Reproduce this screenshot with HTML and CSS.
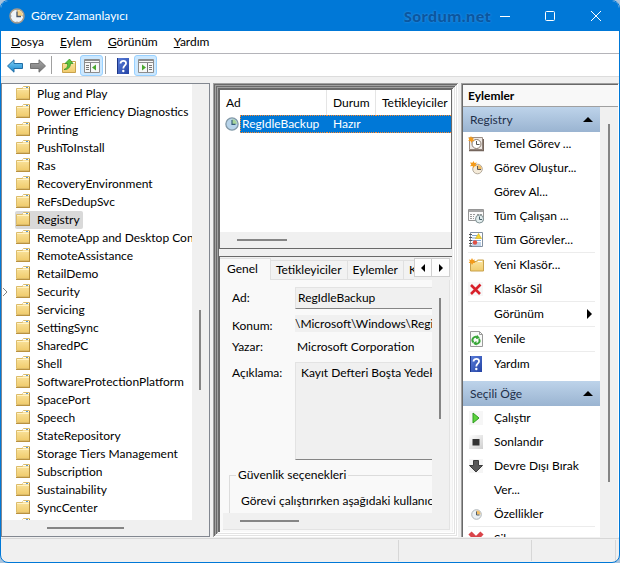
FILE: index.html
```html
<!DOCTYPE html>
<html lang="tr">
<head>
<meta charset="utf-8">
<title>Görev Zamanlayıcı</title>
<link rel="stylesheet" href="styles.css">
</head>
<body>
<svg class="defs" aria-hidden="true">
  <defs>
    <linearGradient id="g-folder" x1="0" y1="0" x2="0" y2="1"><stop offset="0" stop-color="#fbe6a4"/><stop offset="1" stop-color="#f0cb6c"/></linearGradient>
    <linearGradient id="g-back" x1="0" y1="0" x2="0" y2="1"><stop offset="0" stop-color="#7fd0f6"/><stop offset="1" stop-color="#1686cf"/></linearGradient>
    <linearGradient id="g-fwd" x1="0" y1="0" x2="0" y2="1"><stop offset="0" stop-color="#a8a8a8"/><stop offset="1" stop-color="#747474"/></linearGradient>
    <linearGradient id="g-help" x1="0" y1="0" x2="1" y2="1"><stop offset="0" stop-color="#5c80dc"/><stop offset="1" stop-color="#2443a4"/></linearGradient>
    <linearGradient id="g-stop" x1="0" y1="0" x2="1" y2="1"><stop offset="0" stop-color="#fff"/><stop offset="1" stop-color="#cfcfcf"/></linearGradient>
  </defs>
  <symbol id="folder" viewBox="0 0 16 16">
    <path d="M1.500 3.500h6l1-2h6v12h-13z" fill="url(#g-folder)" stroke="#dcbc6a"/>
    <path d="M1 14.500h14M14.500 2v12" stroke="#b9913f" fill="none"/>
    <path d="M8 2.500h6" stroke="#fff"/><path d="M11 2.500h2" stroke="#5b9bd5"/>
    <path d="M2 4.500h12" stroke="#fff3c8"/>
  </symbol>
  <symbol id="clock" viewBox="0 0 16 16">
    <circle cx="8" cy="8" r="7" fill="#eef3f8" stroke="#a59a8c" stroke-width="1.500"/>
    <path d="M8 8V2a6 6 0 0 1 6 6z" fill="#f3cf86"/>
    <path d="M8 3.500V8.500h4" fill="none" stroke="#44546b" stroke-width="1.300"/>
    <path d="M8 1.500v1M8 13.500v1M1.500 8h1M13.500 8h1" stroke="#6d7c8e"/>
  </symbol>
  <symbol id="task" viewBox="0 0 16 16">
    <circle cx="8" cy="8" r="7" fill="#b8d4ea" stroke="#8299a8" stroke-width="1.500"/>
    <path d="M8 8V2.500a5.500 5.500 0 0 1 5.500 5.500z" fill="#a9d69b"/>
    <path d="M8 3.500V8.500h4" fill="none" stroke="#345d78" stroke-width="1.300"/>
  </symbol>
  <symbol id="back" viewBox="0 0 16 16"><path d="M.5 8 7 1.800V5.500h8.500v5H7v3.700z" fill="url(#g-back)" stroke="#206da5"/></symbol>
  <symbol id="forward" viewBox="0 0 16 16"><path d="M15.500 8 9 1.800V5.500H.5v5H9v3.700z" fill="url(#g-fwd)" stroke="#737373"/></symbol>
  <symbol id="up" viewBox="0 0 16 16">
    <path d="M1.500 5.500h6l1-2h6v11h-13z" fill="url(#g-folder)" stroke="#c9a24c"/>
    <path d="M9 4.500h5" stroke="#fff"/>
    <path d="M3 11.500c3-1 4-3 3.500-6H4L8.500 1 12 5.500H9.500C9.500 9 7 12 3 11.500z" fill="#5cc43c" stroke="#2f8f22" stroke-width=".7"/>
  </symbol>
  <symbol id="pane-left" viewBox="0 0 16 16">
    <path d="M.5 1.500h15v13H.5z" fill="#f7f7f7" stroke="#8d8d8d"/><path d="M1 2.500h14M1 4.500h14" stroke="#8d8d8d"/>
    <path d="M6.500 5v9M2 7.500h3M2 9.500h3M2 11.500h3" stroke="#777"/><path d="M12 6.500v6L8 9.500z" fill="#4aa82e"/>
  </symbol>
  <symbol id="pane-right" viewBox="0 0 16 16">
    <path d="M.5 1.500h15v13H.5z" fill="#f7f7f7" stroke="#8d8d8d"/><path d="M1 2.500h14M1 4.500h14" stroke="#8d8d8d"/>
    <path d="M9.500 5v9M11 7.500h3M11 9.500h3M11 11.500h3" stroke="#777"/><path d="M4 6.500v6l4-3z" fill="#4aa82e"/>
  </symbol>
  <symbol id="help" viewBox="0 0 16 16">
    <path d="M2 0h12v16H2z" fill="url(#g-help)"/><path d="M2.500 0v16" stroke="#1c3585"/>
    <path d="M5.500 5.500c0-3.500 6-3.500 5.500 0C11 7.500 8.300 7.500 8.300 10.500" fill="none" stroke="#fff" stroke-width="1.800"/><circle cx="8.300" cy="13" r="1.200" fill="#fff"/>
  </symbol>
  <symbol id="basic" viewBox="0 0 16 16">
    <path d="M1.500 1.500h13v12h-13z" fill="#eee9e5" stroke="#9b8d84"/><path d="M1 14.500h14.500V3" stroke="#74655c" fill="none" stroke-width="1.500"/>
    <circle cx="8.500" cy="8" r="4.500" fill="#fff" stroke="#88796d"/><path d="M8.500 5v3.500h3" fill="none" stroke="#555"/>
    <path d="m3 0 1 2 2-.5L5 3.300l1.500 1.500-2 .2L3.500 7l-1-2L.3 5l1-1.700L0 1.500l2 .3z" fill="#f39b1c"/>
  </symbol>
  <symbol id="create" viewBox="0 0 16 16">
    <circle cx="9.500" cy="9" r="4.800" fill="#f4ead8" stroke="#b4aa9c"/><path d="M9.500 9V5a4 4 0 0 1 4 4z" fill="#f2bc63"/><path d="M9.500 6v3.500h3.500" stroke="#5f5a55" fill="none"/>
    <path d="m5.500 1 1 2 2.500-.5-1.500 2L9 6.300 6.800 6 5.500 8 4.500 6l-2.500.3L3.300 4.500 2 2.500l2.500.3z" fill="#f39a1a"/>
  </symbol>
  <symbol id="running" viewBox="0 0 16 16">
    <path d="M.5 1.500h15v11H.5z" fill="#fafafa" stroke="#969696"/><path d="M1 3h14" stroke="#a5a5a5" stroke-width="2"/><path d="M2 6.500h5M2 8.500h4M2 10.500h4M9 6.500h5" stroke="#999" stroke-dasharray="2 1"/>
    <circle cx="11.500" cy="11" r="4" fill="#e1eced" stroke="#819194"/><path d="M11.500 8.500V11.500h2.500" fill="none" stroke="#48616a"/>
  </symbol>
  <symbol id="notebook" viewBox="0 0 16 16">
    <path d="M2.500.5h12v14h-12z" fill="#fff" stroke="#8290a0"/><path d="M4 3.500h5M4 6h4M4 8.500h9M4 11h9M4 13h9" stroke="#7ea6d2"/><path d="M1 2.500h3M1 5.500h3M1 8.500h3M1 11.500h3M1 14h3" stroke="#555"/>
    <path d="m10.500 1.500 3 5h-6z" fill="#f4d52d" stroke="#c8a518" stroke-width=".6"/><circle cx="7" cy="10.500" r="2.200" fill="#e05046"/>
  </symbol>
  <symbol id="new-folder" viewBox="0 0 16 16">
    <path d="M2.500 4.500h6l1-1.500h6v11h-13z" fill="url(#g-folder)" stroke="#c9a24c"/><path d="M10 4.500h4" stroke="#fff"/>
    <path d="m4 1 1 2 2.200-.5L6 4.300l1.500 1.700-2.300 0L4 8 3 6 .7 6l1.300-1.700L.8 2.500 3 3z" fill="#f39a1a"/>
  </symbol>
  <symbol id="delete" viewBox="0 0 16 16"><path d="M0 1h15v14H0z" fill="#f7f7f7"/><path d="m3 4 9 9M12.500 3.500 3 13" stroke="#d8212b" stroke-width="2.600"/></symbol>
  <symbol id="refresh" viewBox="0 0 16 16">
    <path d="M2.500.5h9l3 3v12h-12z" fill="#f8faf8" stroke="#9a9a9a"/><path d="M11.500.5v3h3" fill="none" stroke="#9a9a9a"/>
    <path d="M5.500 11.500c-3-3 1-7.500 4.500-4.800M11 8c2 3-1.500 6-4.500 4.300" fill="none" stroke="#38a638" stroke-width="1.900"/><path d="m9 3.800 3 3.500-4 .7zM8.500 10v4.500L5 12z" fill="#38a638"/>
  </symbol>
  <symbol id="run" viewBox="0 0 16 16"><path d="M1 1h14v14H1z" fill="#f6f6f6"/><path d="M5 3v10l6-5z" fill="#5bd33c" stroke="#2f9d20"/></symbol>
  <symbol id="end" viewBox="0 0 16 16"><path d="M1 1h14v14H1z" fill="url(#g-stop)"/><path d="M4.500 5h7v6.500h-7z" fill="#333"/></symbol>
  <symbol id="disable" viewBox="0 0 16 16"><path d="M1 1h14v14H1z" fill="#f5f5f5"/><path d="M5.500 2.500h5v5h4L8 14 1.500 7.500h4z" fill="#5a5a5a" stroke="#3d3d3d"/></symbol>
  <symbol id="props" viewBox="0 0 16 16"><circle cx="8.500" cy="8.500" r="4.800" fill="#eaf0f4" stroke="#aeb4b8"/><path d="M8.500 8.500v-4a4 4 0 0 1 4 4z" fill="#f2bf68"/><path d="M8.500 5.500V9h3" fill="none" stroke="#525c66"/></symbol>
  <symbol id="remove" viewBox="0 0 16 16"><path d="m2 2 12 12M14 2 2 14" stroke="#d9444a" stroke-width="4.500"/></symbol>
</svg>

<div class="window">
  <header class="titlebar">
    <svg class="icon"><use href="#clock"/></svg>
    <h1>Görev Zamanlayıcı</h1>
    <span class="watermark">Sordum.net</span>
    <div class="caption">
      <button aria-label="Simge durumuna küçült"><svg viewBox="0 0 10 10"><path d="M0 5.500h10"/></svg></button>
      <button aria-label="Ekranı kapla"><svg viewBox="0 0 10 10"><rect x=".5" y=".5" width="9" height="9" rx="1"/></svg></button>
      <button aria-label="Kapat"><svg viewBox="0 0 10 10"><path d="m0 0 10 10M10 0 0 10"/></svg></button>
    </div>
  </header>
  <nav class="menubar">
    <button><u>D</u>osya</button><button><u>E</u>ylem</button><button><u>G</u>örünüm</button><button><u>Y</u>ardım</button>
  </nav>
  <div class="toolbar">
    <button aria-label="Geri"><svg class="icon"><use href="#back"/></svg></button>
    <button aria-label="İleri"><svg class="icon"><use href="#forward"/></svg></button>
    <span class="divider"></span>
    <button aria-label="Yukarı"><svg class="icon"><use href="#up"/></svg></button>
    <button class="on" aria-label="Konsol ağacı"><svg class="icon"><use href="#pane-left"/></svg></button>
    <span class="divider"></span>
    <button aria-label="Yardım"><svg class="icon"><use href="#help"/></svg></button>
    <button class="on" aria-label="Eylem bölmesi"><svg class="icon"><use href="#pane-right"/></svg></button>
  </div>

  <main class="panes">
    <section class="tree">
      <ul>
        <li><svg class="icon"><use href="#folder"/></svg><span>Plug and Play</span></li>
        <li><svg class="icon"><use href="#folder"/></svg><span>Power Efficiency Diagnostics</span></li>
        <li><svg class="icon"><use href="#folder"/></svg><span>Printing</span></li>
        <li><svg class="icon"><use href="#folder"/></svg><span>PushToInstall</span></li>
        <li><svg class="icon"><use href="#folder"/></svg><span>Ras</span></li>
        <li><svg class="icon"><use href="#folder"/></svg><span>RecoveryEnvironment</span></li>
        <li><svg class="icon"><use href="#folder"/></svg><span>ReFsDedupSvc</span></li>
        <li class="selected"><svg class="icon"><use href="#folder"/></svg><span>Registry</span></li>
        <li><svg class="icon"><use href="#folder"/></svg><span>RemoteApp and Desktop Connections Update</span></li>
        <li><svg class="icon"><use href="#folder"/></svg><span>RemoteAssistance</span></li>
        <li><svg class="icon"><use href="#folder"/></svg><span>RetailDemo</span></li>
        <li class="parent"><svg class="chevron" viewBox="0 0 6 8"><path d="m1 0 4 4-4 4"/></svg><svg class="icon"><use href="#folder"/></svg><span>Security</span></li>
        <li><svg class="icon"><use href="#folder"/></svg><span>Servicing</span></li>
        <li><svg class="icon"><use href="#folder"/></svg><span>SettingSync</span></li>
        <li><svg class="icon"><use href="#folder"/></svg><span>SharedPC</span></li>
        <li><svg class="icon"><use href="#folder"/></svg><span>Shell</span></li>
        <li><svg class="icon"><use href="#folder"/></svg><span>SoftwareProtectionPlatform</span></li>
        <li><svg class="icon"><use href="#folder"/></svg><span>SpacePort</span></li>
        <li><svg class="icon"><use href="#folder"/></svg><span>Speech</span></li>
        <li><svg class="icon"><use href="#folder"/></svg><span>StateRepository</span></li>
        <li><svg class="icon"><use href="#folder"/></svg><span>Storage Tiers Management</span></li>
        <li><svg class="icon"><use href="#folder"/></svg><span>Subscription</span></li>
        <li><svg class="icon"><use href="#folder"/></svg><span>Sustainability</span></li>
        <li><svg class="icon"><use href="#folder"/></svg><span>SyncCenter</span></li>
        <li><svg class="icon"><use href="#folder"/></svg></li>
      </ul>
      <div class="vscroll"><i class="thumb"></i></div>
      <div class="hscroll"><i class="thumb"></i></div>
    </section>

    <section class="center">
      <div class="tasks">
        <table>
          <colgroup><col class="c-icon"><col class="c-name"><col class="c-state"><col></colgroup>
          <thead><tr><th colspan="2">Ad</th><th>Durum</th><th>Tetikleyiciler</th></tr></thead>
          <tbody><tr><td class="mark"><svg class="icon"><use href="#task"/></svg></td><td class="name">RegIdleBackup</td><td>Hazır</td><td></td></tr></tbody>
        </table>
        <div class="hscroll"><i class="thumb"></i></div>
      </div>
      <div class="details">
        <div class="tabs">
          <div class="tablist">
            <button class="active">Genel</button><button>Tetikleyiciler</button><button>Eylemler</button><button>Koşullar</button>
          </div>
          <div class="spin">
            <button aria-label="Önceki"><svg viewBox="0 0 4 8"><path d="M4 0v8L0 4z"/></svg></button><button aria-label="Sonraki"><svg viewBox="0 0 4 8"><path d="M0 0v8l4-4z"/></svg></button>
          </div>
        </div>
        <div class="page">
          <form>
            <label for="ad">Ad:</label><input id="ad" class="boxed" readonly value="RegIdleBackup">
            <label for="konum">Konum:</label><input id="konum" class="path" readonly value="\Microsoft\Windows\Registry">
            <span>Yazar:</span><span class="author">Microsoft Corporation</span>
            <label for="aciklama">Açıklama:</label><textarea id="aciklama" readonly wrap="off">Kayıt Defteri Boşta Yedekleme Görevi</textarea>
            <fieldset><legend>Güvenlik seçenekleri</legend><p>Görevi çalıştırırken aşağıdaki kullanıcı hesabını kullan:</p></fieldset>
          </form>
          <div class="vscroll"><i class="thumb"></i></div>
          <div class="hscroll"><i class="thumb"></i></div>
        </div>
      </div>
    </section>

    <aside class="actions">
      <h2>Eylemler</h2>
      <div class="list">
        <h3>Registry<svg viewBox="0 0 10 5"><path d="m0 5 5-5 5 5z"/></svg></h3>
        <div class="group">
          <button><svg class="icon"><use href="#basic"/></svg>Temel Görev ...</button>
          <button><svg class="icon"><use href="#create"/></svg>Görev Oluştur...</button>
          <button><svg class="icon"></svg>Görev Al...</button>
          <button><svg class="icon"><use href="#running"/></svg>Tüm Çalışan ...</button>
          <button><svg class="icon"><use href="#notebook"/></svg>Tüm Görevler...</button>
          <hr>
          <button><svg class="icon"><use href="#new-folder"/></svg>Yeni Klasör...</button>
          <button><svg class="icon"><use href="#delete"/></svg>Klasör Sil</button>
          <hr>
          <button><svg class="icon"></svg>Görünüm<svg class="more" viewBox="0 0 5 10"><path d="m0 0 5 5-5 5z"/></svg></button>
          <hr>
          <button><svg class="icon"><use href="#refresh"/></svg>Yenile</button>
          <hr>
          <button><svg class="icon"><use href="#help"/></svg>Yardım</button>
        </div>
        <h3>Seçili Öğe<svg viewBox="0 0 10 5"><path d="m0 5 5-5 5 5z"/></svg></h3>
        <div class="group">
          <button><svg class="icon"><use href="#run"/></svg>Çalıştır</button>
          <button><svg class="icon"><use href="#end"/></svg>Sonlandır</button>
          <button><svg class="icon"><use href="#disable"/></svg>Devre Dışı Bırak</button>
          <button><svg class="icon"></svg>Ver...</button>
          <button><svg class="icon"><use href="#props"/></svg>Özellikler</button>
          <hr>
          <button><svg class="icon"><use href="#remove"/></svg>Sil</button>
        </div>
      </div>
      <div class="vscroll"><i class="thumb"></i></div>
    </aside>
  </main>

  <footer class="status"><span></span><span></span><span></span></footer>
</div>
</body>
</html>
```
FILE: styles.css
```css
* { box-sizing: border-box; }
body { margin: 0; background: #a9c3dc; font: 12px/16px Lato, "Open Sans", "Noto Sans", sans-serif; color: #000; }
button { font: inherit; color: inherit; background: none; border: 0; padding: 0; margin: 0; white-space: nowrap; }
input, textarea { font: inherit; color: inherit; border: 0; padding: 0; margin: 0; border-radius: 0; outline: 0; min-width: 0; }
h1, h2, h3, ul, p { margin: 0; padding: 0; font: inherit; }
.defs { position: absolute; width: 0; height: 0; }
.icon { width: 16px; height: 16px; flex: none; display: block; }

.window { height: 100vh; display: grid; grid-template-rows: 30px 22px 24px minmax(0, 1fr) 24px; border: 1px solid #0078d7; border-radius: 8px; overflow: hidden; background: #f0f0f0; }

.titlebar { display: flex; align-items: center; background: #0078d7; color: #fff; padding-left: 8px; }
.titlebar h1 { margin-left: 6px; flex: 1; }
.watermark { font: bold 15px/20px "Noto Sans", sans-serif; color: #0a57a0; text-shadow: 0 0 2px #3f9bea; margin-right: -8px; }
.caption { display: flex; }
.caption button { width: 46px; height: 30px; display: grid; place-items: center; }
.caption button:first-child { width: 44px; }
.caption svg { width: 10px; height: 10px; fill: none; stroke: #fff; }

.menubar { display: flex; gap: 16px; padding-left: 10px; background: #fff; }
.toolbar { display: flex; align-items: end; background: #fff; border-top: 1px solid #b4b4b9; border-bottom: 1px solid #dcdcdc; padding-left: 2px; }
.toolbar button { width: 23px; height: 21px; display: grid; place-items: center; }
.toolbar .on { background: #cce8ff; border: 1px solid #99d1ff; border-radius: 3px; }
.toolbar .divider { width: 1px; height: 18px; background: #a0a0a0; margin: 0 5px 2px 2px; }

.panes { display: grid; grid-template-columns: 209px minmax(0, 1fr) 158px; gap: 3px; padding: 6px 0 0; min-height: 0; }
.panes > * { min-width: 0; min-height: 0; }
.thumb { display: block; background: #858585; }
.vscroll { background: #f0f0f0; padding: 0 7px; }
.vscroll .thumb { width: 2px; }
.hscroll { background: #f0f0f0; display: flex; align-items: center; }
.hscroll .thumb { height: 2px; }

.tree { display: grid; grid-template: minmax(0, 1fr) 16px / minmax(0, 1fr) 17px; border: 1px solid #828790; margin-bottom: 1px; background: #fff; }
.tree ul { overflow: hidden; list-style: none; padding: 1px 0 0 13px; }
.tree li { display: flex; height: 18px; align-items: center; white-space: nowrap; }
.tree li .icon { margin: 0 4px 2px 0; }
.tree li span { padding: 0 3px 0 2px; line-height: 18px; }
.tree .selected { width: fit-content; background: #d9d9d9; border-radius: 2px; }
.tree .parent { margin-left: -13px; }
.chevron { width: 6px; height: 8px; margin-right: 7px; fill: none; stroke: #858585; }
.tree .vscroll .thumb { height: 80px; margin-top: 226px; }
.tree .hscroll { grid-column: 1 / 3; }
.tree .hscroll .thumb { width: 77px; margin-left: 45px; }

.center { display: grid; grid-template-rows: 160px minmax(0, 1fr); gap: 7px; padding: 6px 6px 5px 6px; margin-bottom: 1px; background: #f0f0f0;
  box-shadow: inset 1px 1px #a0a0a0, inset -1px -1px #fff, inset 2px 2px #696969, inset -2px -2px #e3e3e3, inset 3px 3px #a0a0a0, inset -3px -3px #fff, inset 4px 4px #696969, inset -4px -4px #e3e3e3, inset 5px 5px #a0a0a0, inset -5px -5px #fff, inset 6px 6px #696969; }
.tasks { border: 1px solid #696969; background: #fff; display: flex; flex-direction: column; overflow: hidden; }
.tasks .hscroll { height: 16px; margin-top: auto; padding-left: 17px; }
.tasks .thumb { width: 50px; }
table { width: 100%; table-layout: fixed; border-spacing: 0; border-collapse: separate; }
.c-icon { width: 20px; }
.c-name { width: 87px; }
.c-state { width: 49px; }
th { height: 25px; padding: 0 0 0 6px; text-align: left; font-weight: normal; white-space: nowrap; border-right: 1px solid #e5e5e5; }
th:last-child { border-right: 0; }
td { height: 18px; padding: 0 0 0 6px; background: #0078d7; color: #fff; border: 1px dotted #ff8728; border-width: 1px 0; line-height: 16px; white-space: nowrap; }
td.name { padding-left: 1px; border-left-width: 1px; }
td.mark { background: none; border: 0; padding: 0 0 0 5px; }
td.mark .icon { width: 14px; height: 14px; }

.details { display: flex; flex-direction: column; border-left: 1px solid #696969; border-top: 1px solid #696969; background: #f9f9f9; min-height: 0; overflow: hidden; }
.tabs { display: flex; height: 23px; flex: none; background: #f0f0f0; }
.tablist { flex: 1; min-width: 0; display: flex; align-items: flex-end; overflow: hidden; }
.tablist button { height: 20px; padding: 0 5px; border: 1px solid #e0e0e0; border-left: 0; background: #f2f2f2; flex: none; }
.tablist .active { height: 22px; padding: 0 12px 2px 7px; background: #f9f9f9; border-bottom: 0; }
.spin { display: flex; padding: 1px 2px 3px 0; }
.spin button { width: 18px; display: grid; place-items: center; background: #fdfdfd; border: 1px solid #d0d0d0; }
.spin button + button { border-left: 0; }
.spin svg { width: 4px; height: 8px; }
.page { flex: 1; min-height: 0; display: grid; grid-template: minmax(0, 1fr) 16px / minmax(0, 1fr) 17px; margin: 0 2px 2px 3px; border-right: 1px solid #e3e3e3; border-bottom: 1px solid #e3e3e3; }
.page .vscroll .thumb { height: 121px; margin-top: 18px; }
.page .hscroll { grid-column: 1 / 3; }
.page .hscroll .thumb { width: 59px; margin-left: 17px; }
form { display: grid; grid-template-columns: 63px minmax(0, 1fr); grid-template-rows: 22px 17px 18px 98px auto; row-gap: 6px; padding: 7px 0 0 9px; overflow: hidden; align-content: start; line-height: 18px; }
form > label { align-self: start; padding-top: 2px; }
.boxed { background: #f0f0f0; border: 1px solid #e3e3e3; border-right: 0; border-bottom-color: #858585; padding: 0 2px; }
.path { background: #f0f0f0; }
.author { padding-left: 2px; white-space: nowrap; }
textarea { background: #f0f0f0; border: 1px solid #e3e3e3; border-right: 0; border-bottom-color: #858585; padding: 1px 0 0 5px; resize: none; overflow: hidden; }
fieldset { grid-column: 1 / 3; min-width: 0; height: 60px; margin: 0 -4px 0 -3px; padding: 8px 0 0 11px; border: 1px solid #dcdcdc; }
legend { margin-left: -5px; padding: 0 2px; }
fieldset p { white-space: nowrap; }

.actions { display: grid; grid-template: 22px minmax(0, 1fr) / minmax(0, 1fr) 18px; border: 1px solid #a0a0a0; border-right-color: #fff; border-bottom: 0; box-shadow: inset 1px 1px #696969; padding: 1px 0 0 1px; margin-bottom: 1px; overflow: hidden; }
.actions h2 { grid-column: 1 / 3; font-weight: bold; line-height: 22px; padding-left: 5px; background: #f8f8f8; border-bottom: 1px solid #a0a0a0; }
.list { background: #fff; overflow: hidden; }
.list h3 { display: flex; align-items: center; justify-content: space-between; height: 25px; padding: 0 7px; background: linear-gradient(#bdd3ea, #9ab4d1); color: #1e2f4a; }
.list h3 svg { width: 10px; height: 5px; }
.group { padding: 0 5px 5px; }
.group button { display: flex; align-items: center; width: 100%; height: 24px; gap: 10px; }
.group hr { margin: 0; border: 0; height: 1px; background: #ececec; }
.group .more { width: 5px; height: 10px; margin-left: auto; margin-right: 3px; }
.actions .vscroll { padding: 0 8px; }
.actions .vscroll .thumb { height: 358px; margin-top: 17px; }

.status { display: grid; grid-template-columns: 398px 133px 1fr; border-top: 1px solid #d7d7d7; padding: 1px 3px 1px 0; }
.status span { border-right: 1px solid #d7d7d7; }
```
